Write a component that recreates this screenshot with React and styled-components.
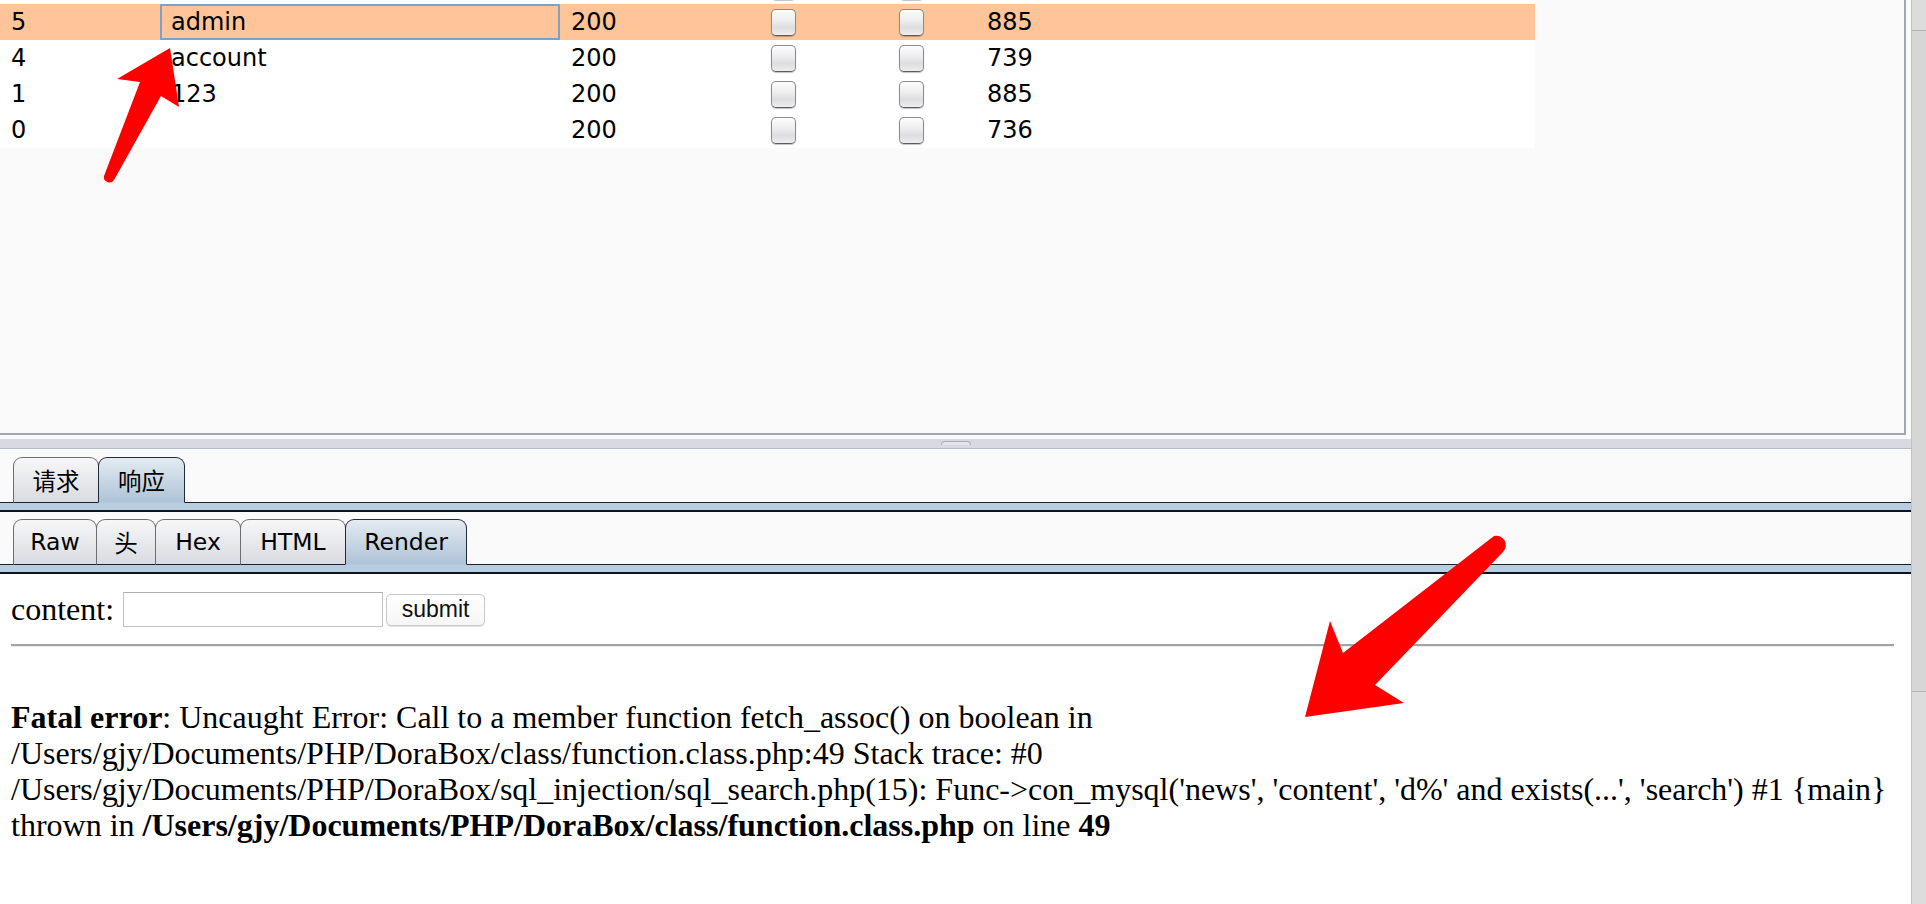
import React from "react";
import styled, { createGlobalStyle } from "styled-components";

const Global = createGlobalStyle`
  html, body { margin: 0; padding: 0; }
  body { width: 1926px; height: 904px; overflow: hidden; background: #fafafa; }
  #root { width: 1926px; height: 904px; }
  * { box-sizing: border-box; }
`;

const Page = styled.div`
  position: relative;
  display: flex;
  width: 1926px;
  height: 904px;
  font-family: "DejaVu Sans", "Noto Sans CJK SC", sans-serif;
  color: #000;
`;

const Main = styled.div`
  flex: 1;
  display: flex;
  flex-direction: column;
  background: #fafafa;
  min-width: 0;
`;

const ScrollStrip = styled.div`
  width: 15px;
  display: flex;
  flex-direction: column;
  background: #dcdcdc;
  border-left: 1px solid #c2c2c2;
`;

const ScrollThumb = styled.div`
  margin-top: 30px;
  height: 662px;
  border-top: 1px solid #b4b4b4;
  border-bottom: 1px solid #b4b4b4;
  background: #d6d6d6;
`;

const TablePanel = styled.div`
  height: 435px;
  margin-right: 5px;
  background: #fafafa;
  border-right: 2px solid #a2a6ae;
  border-bottom: 2px solid #a2a6ae;
  overflow: hidden;
`;

const Rows = styled.div`
  width: 1535px;
  margin-top: -32px;
  display: flex;
  flex-direction: column;
`;

const Row = styled.div`
  display: grid;
  grid-template-columns: 160px 400px 200px 128px 88px 1fr;
  height: 36px;
  align-items: center;
  background: ${(p) => (p.$selected ? "#ffc598" : "#ffffff")};
  font-size: 24px;
`;

const Cell = styled.div`
  height: 36px;
  line-height: 36px;
  padding-left: 11px;
  white-space: nowrap;
  display: flex;
  align-items: center;
`;

const FocusCell = styled(Cell)`
  border: ${(p) => (p.$focus ? "2px solid #7fa0c6" : "none")};
  padding-left: ${(p) => (p.$focus ? "9px" : "11px")};
`;

const Check = styled.span`
  display: inline-block;
  width: 25px;
  height: 27px;
  border-radius: 5px;
  border: 1px solid #8c8c8c;
  border-bottom-color: #5c5c5c;
  background: linear-gradient(#fefefe 0%, #ececee 45%, #dcdde0 70%, #eeeeef 100%);
  box-shadow: 0 1px 1px rgba(0, 0, 0, 0.25);
`;

const Splitter = styled.div`
  height: 15px;
  display: flex;
  flex-direction: column;
  align-items: center;
  padding-top: 4px;
`;

const SplitBand = styled.div`
  align-self: stretch;
  height: 10px;
  background: #d7dae2;
  border-bottom: 1px solid #b8bcc4;
  display: flex;
  justify-content: center;
`;

const Grip = styled.div`
  width: 30px;
  height: 4px;
  margin-top: 2px;
  border-radius: 4px 4px 0 0;
  border: 1px solid #a6abb4;
  border-bottom: none;
  background: #e3e6ec;
`;

const TabBar = styled.div`
  display: flex;
  align-items: flex-end;
  padding: ${(p) => p.$top}px 0 0 14px;
  border-bottom: 1px solid #1b2230;
`;

const Tab = styled.div`
  width: ${(p) => p.$w}px;
  height: 46px;
  margin-left: -1px;
  margin-bottom: -1px;
  display: flex;
  align-items: center;
  justify-content: center;
  font-size: 23.5px;
  border: 1.5px solid ${(p) => (p.$active ? "#1d2b3c" : "#6e6e72")};
  border-bottom: ${(p) => (p.$active ? "1px solid #b4c8dc" : "1px solid #1b2230")};
  border-radius: 9px 9px 0 0;
  background: ${(p) =>
    p.$active
      ? "linear-gradient(#e4ebf2 0%, #c9d7e4 50%, #aec3d6 100%)"
      : "linear-gradient(#f7f7f9 0%, #e8e9ed 50%, #d9dbe1 100%)"};
  position: relative;
  z-index: ${(p) => (p.$active ? 1 : 0)};
`;

const TabBand = styled.div`
  height: 9px;
  background: #b9cde1;
  border-bottom: 2px solid #0d1420;
`;

const Content = styled.div`
  flex: 1;
  background: #ffffff;
  padding: 18px 17px 0 11px;
  font-family: "Liberation Serif", "Times New Roman", serif;
  font-size: 32px;
`;

const FormRow = styled.div`
  display: flex;
  align-items: center;
  height: 35px;
`;

const Label = styled.span`
  margin-right: 9px;
`;

const Input = styled.input`
  width: 260px;
  height: 35px;
  border: 1px solid #c2c2c2;
  border-top-color: #b0b0b0;
  background: #fff;
  margin: 0 3px 0 0;
  padding: 0;
`;

const Button = styled.button`
  width: 99px;
  height: 32px;
  border: 1px solid #c9c9c9;
  border-radius: 5px;
  background: linear-gradient(#ffffff, #f6f6f6);
  font-family: "Liberation Sans", Arial, sans-serif;
  font-size: 23px;
  color: #111;
  padding: 0;
  box-shadow: 0 1px 1px rgba(0, 0, 0, 0.12);
`;

const Rule = styled.div`
  margin-top: 17px;
  height: 3px;
  border-top: 2px solid #a4a4a4;
  border-bottom: 1px solid #ececec;
`;

const ErrorBlock = styled.div`
  margin-top: 52px;
  line-height: 36px;
`;

const Line = styled.div`
  white-space: pre;
`;

const Overlay = styled.svg`
  position: absolute;
  left: 0;
  top: 0;
  pointer-events: none;
`;

const rows = [
  { n: "6", p: "sqlmap", s: "200", l: "885" },
  { n: "5", p: "admin", s: "200", l: "885", sel: true },
  { n: "4", p: "account", s: "200", l: "739" },
  { n: "1", p: "123", s: "200", l: "885" },
  { n: "0", p: "", s: "200", l: "736" },
];

const topTabs = [
  { t: "请求", w: 86 },
  { t: "响应", w: 87, a: true },
];

const subTabs = [
  { t: "Raw", w: 84 },
  { t: "头", w: 60 },
  { t: "Hex", w: 86 },
  { t: "HTML", w: 106 },
  { t: "Render", w: 122, a: true },
];

export default function App() {
  return (
    <>
      <Global />
      <Page>
        <Main>
          <TablePanel>
            <Rows>
              {rows.map((r) => (
                <Row key={r.n} $selected={r.sel}>
                  <Cell>{r.n}</Cell>
                  <FocusCell $focus={r.sel}>{r.p}</FocusCell>
                  <Cell>{r.s}</Cell>
                  <Cell>
                    <Check />
                  </Cell>
                  <Cell>
                    <Check />
                  </Cell>
                  <Cell>{r.l}</Cell>
                </Row>
              ))}
            </Rows>
          </TablePanel>
          <Splitter>
            <SplitBand>
              <Grip />
            </SplitBand>
          </Splitter>
          <TabBar $top={7}>
            {topTabs.map((t) => (
              <Tab key={t.t} $w={t.w} $active={t.a}>
                {t.t}
              </Tab>
            ))}
          </TabBar>
          <TabBand />
          <TabBar $top={7}>
            {subTabs.map((t) => (
              <Tab key={t.t} $w={t.w} $active={t.a}>
                {t.t}
              </Tab>
            ))}
          </TabBar>
          <TabBand />
          <Content>
            <FormRow>
              <Label>content:</Label>
              <Input />
              <Button>submit</Button>
            </FormRow>
            <Rule />
            <ErrorBlock>
              <Line>
                <b>Fatal error</b>: Uncaught Error: Call to a member function fetch_assoc() on boolean in
              </Line>
              <Line>/Users/gjy/Documents/PHP/DoraBox/class/function.class.php:49 Stack trace: #0</Line>
              <Line>
                /Users/gjy/Documents/PHP/DoraBox/sql_injection/sql_search.php(15): Func-&gt;con_mysql('news', 'content', 'd%' and exists(...', 'search') #1 {"{main}"}
              </Line>
              <Line>
                thrown in <b>/Users/gjy/Documents/PHP/DoraBox/class/function.class.php</b> on line <b>49</b>
              </Line>
            </ErrorBlock>
          </Content>
        </Main>
        <ScrollStrip>
          <ScrollThumb />
        </ScrollStrip>
        <Overlay width="1926" height="904" viewBox="0 0 1926 904">
          <path
            d="M170,48 L179,107 L161,96 L114,180 A5.5,5.5 0 0 1 104,176 L140,82 L117,79 Z"
            fill="#fe0000"
          />
          <path
            d="M1305,717 L1330,621 L1343,653 L1494,536 A9.5,9.5 0 0 1 1503,552 L1375,685 L1404,703 Z"
            fill="#fe0000"
          />
        </Overlay>
      </Page>
    </>
  );
}
